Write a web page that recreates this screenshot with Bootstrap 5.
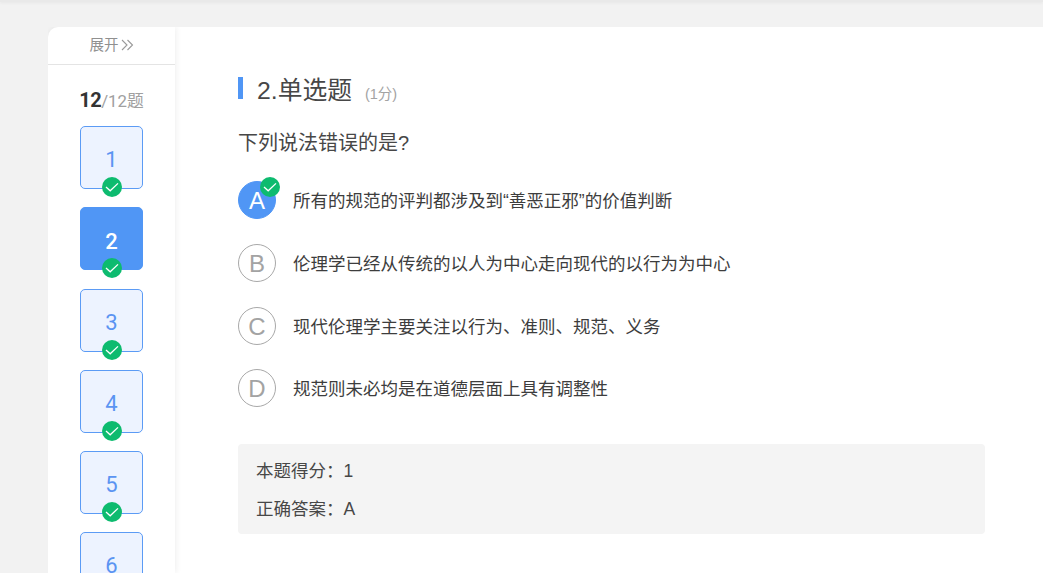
<!DOCTYPE html>
<html lang="zh-CN">
<head>
    <meta charset="UTF-8"/>
    <title>单选题</title>
    <link href="https://cdn.jsdelivr.net/npm/bootstrap@5.3.3/dist/css/bootstrap.min.css" rel="stylesheet"/>
    <style>
        html, body {
            height: 573px;
            overflow: hidden;
        }

        body {
            background-color: #f2f2f2;
            color: #474747;
            font-family: "Liberation Sans", "Noto Sans CJK SC", sans-serif;
        }

        .top-strip {
            height: 2px;
            background-color: #e9e9e9;
            box-shadow: 0 1px 3px rgba(0, 0, 0, .06);
        }

        .page-wrap {
            margin: 25px 0 0 48px;
            height: 546px;
            overflow: hidden;
        }

        .side-panel {
            position: relative;
            z-index: 1;
            width: 127px;
            flex: none;
            background-color: #fff;
            border-radius: 10px 0 0 0;
            box-shadow: 1px 0 6px rgba(0, 0, 0, .07);
        }

        .expand-row {
            height: 38px;
            border-bottom: 1px solid #e4e4e4;
            color: #909090;
            font-size: 14.5px;
            line-height: 37px;
        }

        .expand-row svg {
            width: 13px;
            height: 12px;
            margin-left: 2px;
            vertical-align: -1px;
        }

        .count-row {
            margin-top: 23px;
            height: 24px;
            line-height: 24px;
            font-size: 16.8px;
            color: #a0a0a0;
            font-family: Roboto, "Noto Sans CJK SC", sans-serif;
        }

        .count-row b {
            color: #333;
            font-size: 20px;
            letter-spacing: -.5px;
        }

        .tile-list {
            margin-top: 14px;
            gap: 18.3px;
        }

        .q-tile {
            position: relative;
            width: 63px;
            height: 63px;
            background-color: #edf3ff;
            border: 1px solid #5b9bf5;
            border-radius: 5px;
            color: #5b94f2;
            font-family: Roboto, sans-serif;
            font-size: 22px;
            line-height: 65px;
            text-align: center;
        }

        .q-tile.is-current {
            background-color: #5096f5;
            border-color: #5096f5;
            color: #fff;
            font-weight: 500;
            line-height: 67px;
        }

        .ok-badge {
            position: absolute;
            display: block;
            width: 20px;
            height: 20px;
        }

        .q-tile .ok-badge {
            left: 21px;
            bottom: -9px;
        }

        .main-panel {
            background-color: #fff;
            padding: 50px 58px 0 63px;
        }

        .q-title {
            height: 22px;
            border-left: 5px solid #5096f5;
            padding-left: 14px;
            font-size: 24.8px;
            line-height: 27px;
            color: #474747;
        }

        .q-title small {
            font-size: 14.5px;
            color: #a3a3a3;
            margin-left: 6px;
        }

        .q-text {
            margin-top: 30px;
            font-size: 20px;
            line-height: 29px;
        }

        .opt-list {
            margin-top: 23.3px;
            gap: 24.7px;
        }

        .opt-row {
            height: 38px;
            font-size: 17.5px;
            color: #3d3d3d;
        }

        .opt-row > span {
            padding-top: 2px;
        }

        .opt-circle {
            position: relative;
            width: 38px;
            height: 38px;
            flex: none;
            margin-right: 17px;
            border: 1px solid #a8a8a8;
            border-radius: 50%;
            color: #a3a3a3;
            font-size: 24px;
            line-height: 38px;
            text-align: center;
        }

        .opt-circle.is-picked {
            background-color: #5096f5;
            border-color: #5096f5;
            color: #fff;
        }

        .opt-circle .ok-badge {
            right: -5px;
            top: -5px;
        }

        .result-box {
            margin-top: 36.6px;
            height: 90px;
            padding: 8px 18px;
            background-color: #f4f4f4;
            border-radius: 4px;
            font-size: 17.5px;
            line-height: 38px;
        }
    </style>
</head>
<body>
<div class="top-strip"></div>
<div class="page-wrap d-flex">
    <div class="side-panel">
        <div class="expand-row text-center">展开<svg viewBox="0 0 13 12"><path d="M1 1 6 6 1 11M6.5 1 11.5 6 6.5 11" fill="none" stroke="#9a9a9a" stroke-width="1.1"/></svg></div>
        <div class="count-row text-center"><b>12</b>/12题</div>
        <div class="tile-list d-flex flex-column align-items-center" id="tileList"></div>
    </div>
    <div class="main-panel flex-grow-1">
        <div class="q-title">2.单选题 <small>(1分)</small></div>
        <div class="q-text">下列说法错误的是?</div>
        <div class="opt-list d-flex flex-column">
            <div class="opt-row d-flex align-items-center">
                <div class="opt-circle is-picked">A
                    <svg class="ok-badge" viewBox="0 0 20 20"><circle cx="10" cy="10" r="10" fill="#0dbb6f"/><path d="M4 10 8.2 13.8 16 6.4" fill="none" stroke="#fff" stroke-width="1.3"/></svg>
                </div>
                <span>所有的规范的评判都涉及到“善恶正邪”的价值判断</span>
            </div>
            <div class="opt-row d-flex align-items-center">
                <div class="opt-circle">B</div>
                <span>伦理学已经从传统的以人为中心走向现代的以行为为中心</span>
            </div>
            <div class="opt-row d-flex align-items-center">
                <div class="opt-circle">C</div>
                <span>现代伦理学主要关注以行为、准则、规范、义务</span>
            </div>
            <div class="opt-row d-flex align-items-center">
                <div class="opt-circle">D</div>
                <span>规范则未必均是在道德层面上具有调整性</span>
            </div>
        </div>
        <div class="result-box">
            <div>本题得分：1</div>
            <div>正确答案：A</div>
        </div>
    </div>
</div>

<script>
    const badge = '<svg class="ok-badge" viewBox="0 0 20 20"><circle cx="10" cy="10" r="10" fill="#0dbb6f"/><path d="M4 10 8.2 13.8 16 6.4" fill="none" stroke="#fff" stroke-width="1.3"/></svg>';
    const tiles = [1, 2, 3, 4, 5, 6].map(n => {
        const cls = n === 2 ? "q-tile is-current" : "q-tile";
        return `<div class="${cls}">${n}${badge}</div>`;
    });
    document.getElementById("tileList").innerHTML = tiles.join("");
</script>
<script src="https://cdn.jsdelivr.net/npm/bootstrap@5.3.3/dist/js/bootstrap.bundle.min.js"></script>
</body>
</html>
